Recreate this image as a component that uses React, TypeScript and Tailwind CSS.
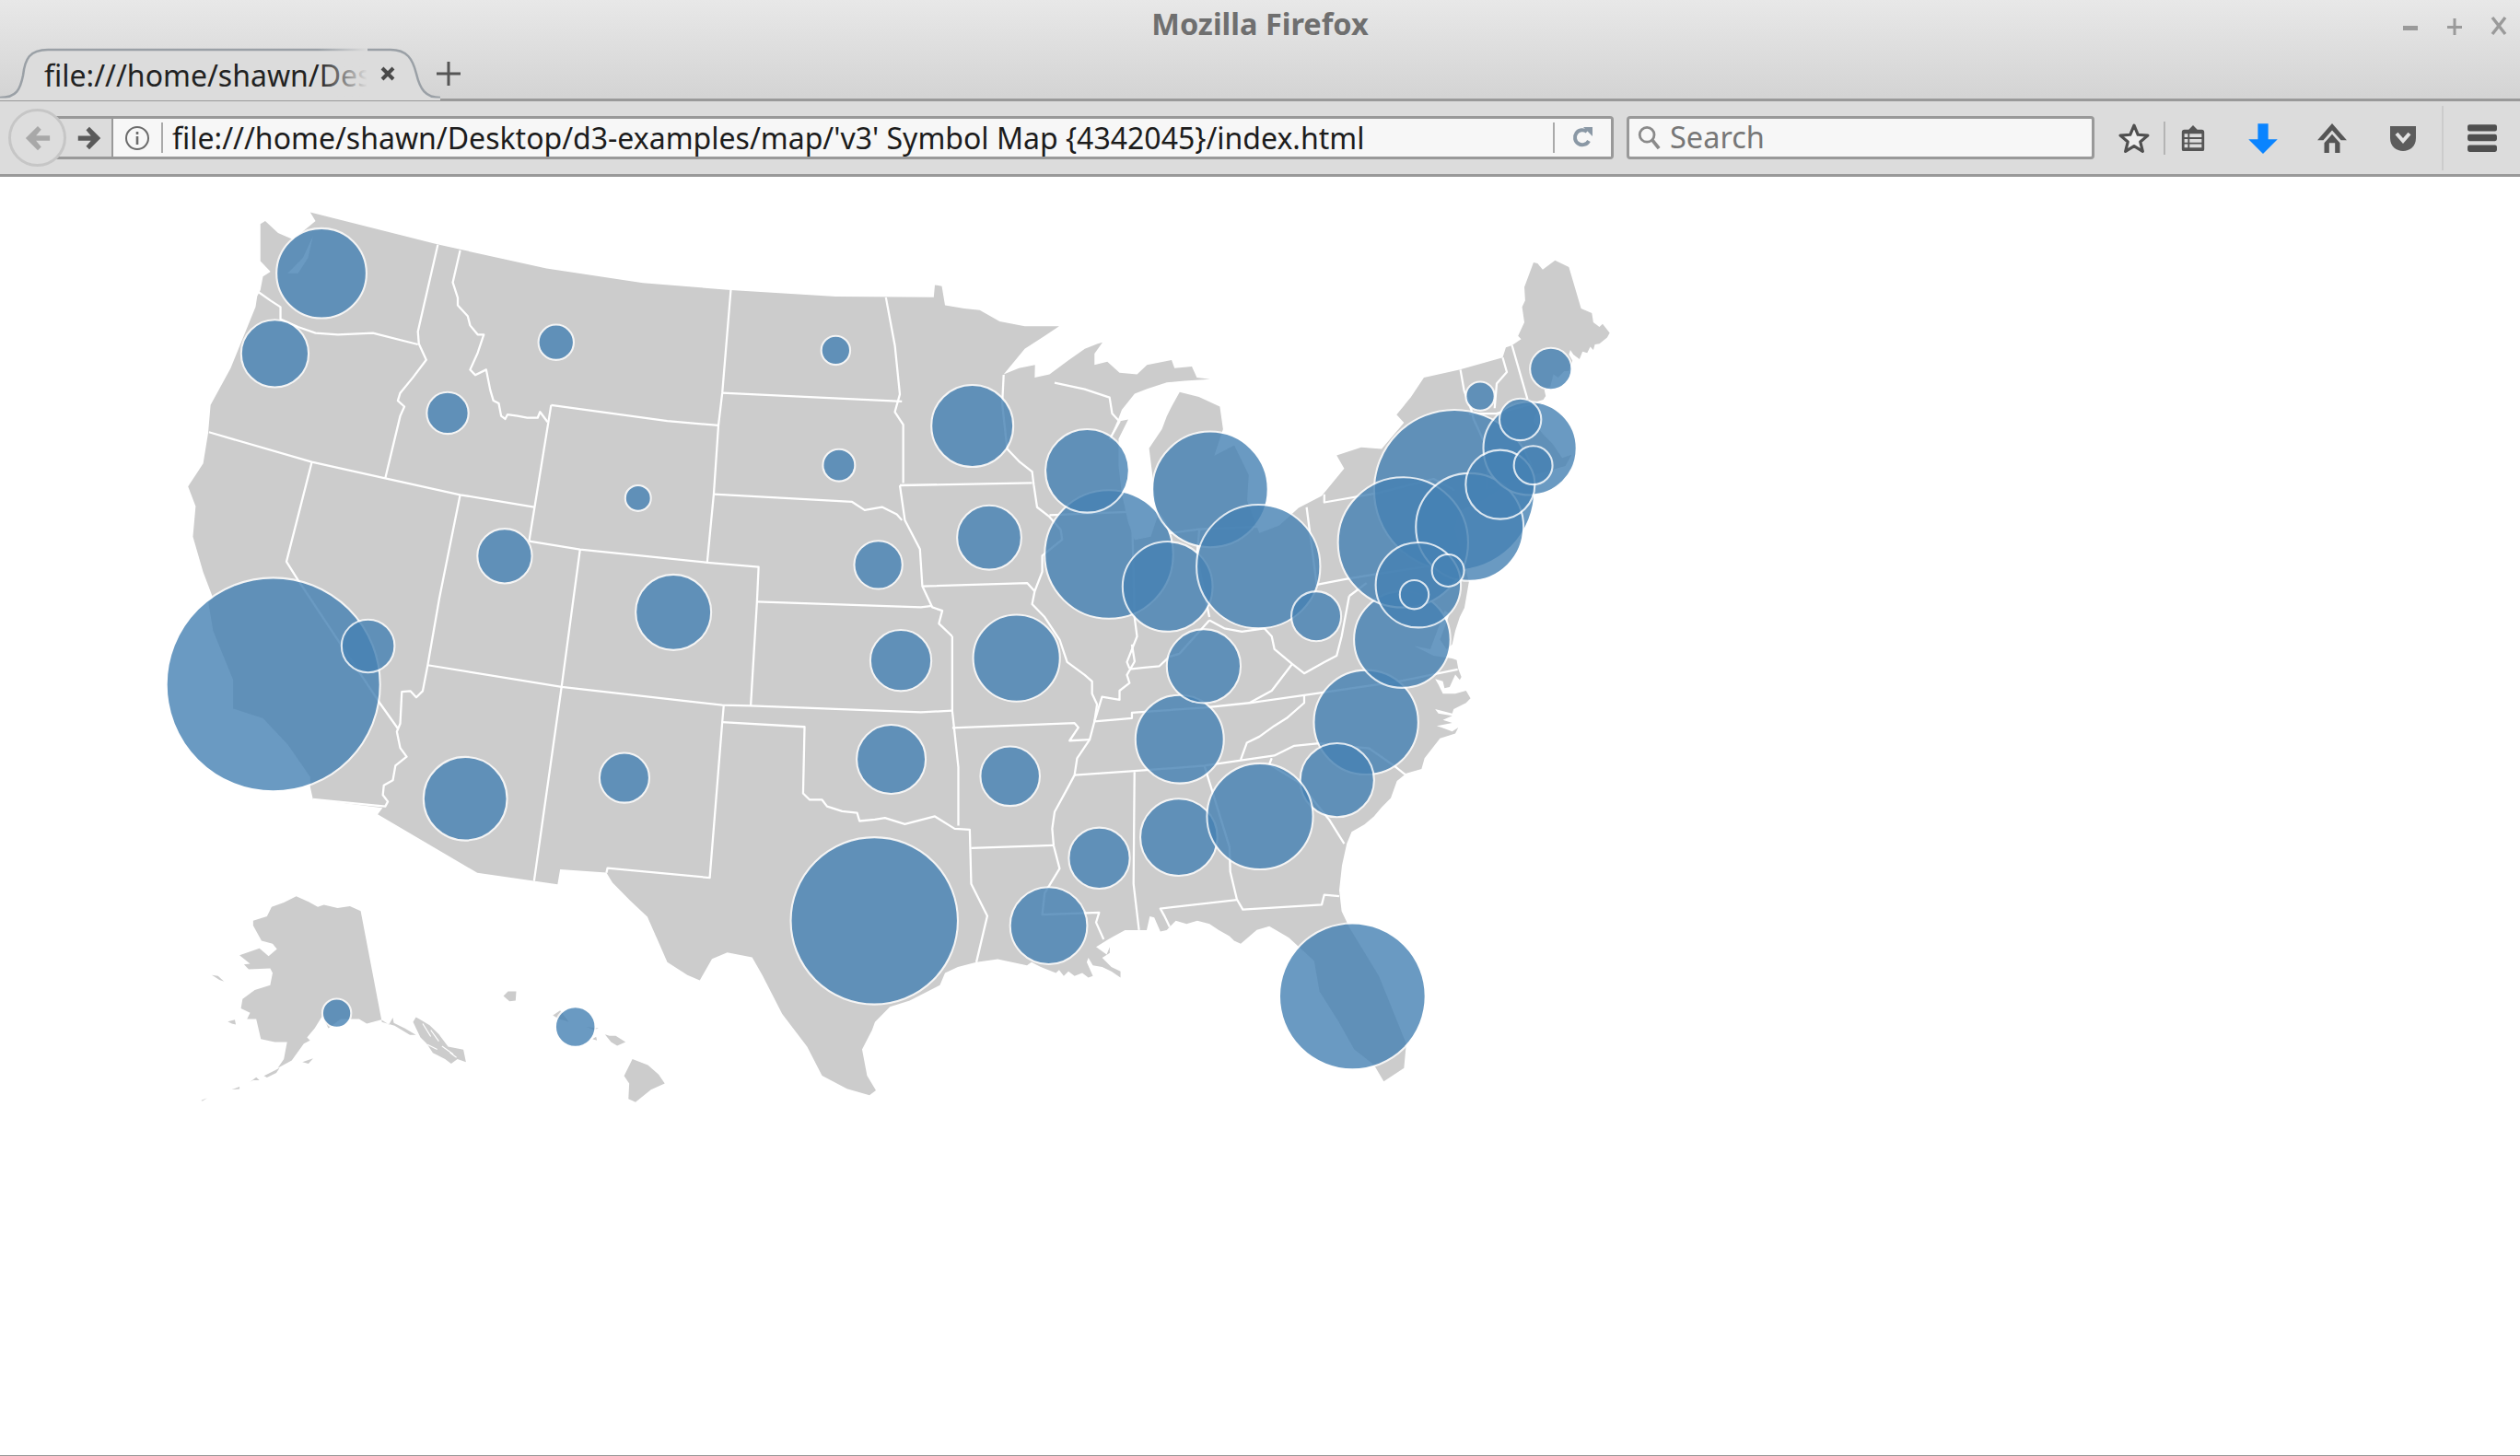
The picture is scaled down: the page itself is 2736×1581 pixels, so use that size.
import React from 'react';

// Land outline of the lower 48, in 1568-wide map units
const LAND =
  'M193 132 L272 152 L340 167 L400 176 L454.7 180.5 L520 184.5 L581 185 L581.7 177.3 L586 178 L588 190 L600 192 L609.6 193 L622 200 L637.6 203 L659 203 L650 209 L637.6 217 L624.5 233 L634 229 L644 227 L643.8 235 L653 233 L665 224 L675 217 L682.6 214 L686 213 L681 220 L681 227 L689 225 L696.6 232 L707.5 233 L713.7 227 L729 224 L730.8 229 L741.6 228 L744.7 235 L753 236 L737 237 L726 238 L713.7 242 L706 245 L698 255 L695.7 261 L690.4 273 L697 262 L702 261 L696 273 L696 290 L698 307 L702 325 L706 336 L716 334 L720 322 L717 295 L715 279 L723 267 L726 259 L729 253 L734 244 L746 247 L759 253 L761 267 L755.6 283.5 L768 277 L777 295.5 L776 311.6 L783.6 331.7 L796 327 L808 316 L822.4 308.6 L836.4 291.5 L831.7 283.4 L847 278.4 L859.7 279.4 L873.6 263 L869 258 L878 247 L886 235 L908 230 L935 222.5 L937 216.2 L940.8 214.9 L946.5 211 L944.6 209 L948.5 200.5 L947.1 191 L949 187 L948.5 178.6 L954.2 163.3 L956.7 163.9 L959.9 167.7 L967.6 162 L976.2 166.2 L983.8 192 L990.5 194.8 L991.4 200.5 L995.2 203.4 L997.2 201.5 L1001.6 207.2 L1000 210 L995.2 213.9 L992.4 214.3 L991.4 217.7 L989.5 215.8 L987.6 219.6 L984.7 218.7 L982.8 223.5 L979 220.6 L977.1 217.7 L976.2 220.6 L978.4 224.4 L976.2 231 L973.3 231 L969.5 235 L966.6 233 L964.7 240.6 L960.9 242.6 L961.8 246.4 L959.9 249.2 L957.5 253 L954 262 L960 270 L966 276 L972 285 L978 283 L974 290 L960 294 L945 298 L925 304 L935 303 L925 310 L908 318 L905 329 L909 343 L914 362 L911.2 378.2 L908.3 384 L905.5 392.5 L903.6 401 L900 404 L896 398 L902 382 L899 380 L893 396 L890 404 L880 402 L892 408 L903.6 409.7 L906.4 410.7 L907.4 416.4 L909.3 421.2 L908.3 423 L905.5 419.8 L902 427.5 L898.8 428.2 L897.8 424 L893 422.5 L895 426 L897.8 431.7 L905.5 431.7 L912.2 429.8 L915 434.5 L912.2 437.4 L904.5 441.2 L903.6 444 L893 441.2 L895 444 L903.6 445.4 L897.8 448 L903.6 449.8 L894 451.7 L897.8 453 L903.6 455.2 L907.4 452.7 L905.5 456.5 L896 459.4 L886.4 471.8 L884.5 478.5 L875 481.3 L869.2 486 L865.4 496.6 L859.6 502.4 L854.9 508 L849 513 L841 517.6 L838 525 L835 538.6 L833.3 554 L834.8 567 L839.5 577 L858 607.4 L875 649.4 L873.6 664.7 L861 673 L855 662.8 L842.6 653 L833 636 L821 617 L817.7 598 L802 583.5 L789.8 576.4 L782 578.7 L772 587.3 L767.9 585.4 L765 582.6 L758.4 578.8 L752.6 574.9 L745 573 L738.3 574.9 L731.6 573 L725.9 578.8 L722 579.7 L718.2 571 L715.4 570.2 L713.5 578.8 L700 578.8 L689.6 584.5 L682 589.3 L688.6 594 L690.5 589.3 L690.5 593 L685.8 596 L691.5 601.7 L697.2 604.5 L697.2 608.4 L691.5 604.5 L685.8 601.7 L680 600.7 L677.2 596 L676.2 598.8 L680 607.4 L677.2 608.4 L673.4 605.5 L668.6 607.4 L664.8 604.5 L661.9 607.4 L659 603.6 L657 605.5 L647.6 601.7 L641.8 598.8 L639 600.7 L620.8 596.9 L607.5 598.8 L596 601.7 L588 605.5 L584.8 613 L566 622.7 L553.7 626.5 L544.4 636 L542.6 641 L536.4 653 L539.5 669.4 L545 678.5 L541 681.6 L527 677.5 L511.5 669.4 L502.2 651.3 L486.7 631 L474.3 606.8 L468 595.7 L452.5 592.7 L443 596.7 L435.4 610 L427.7 606.8 L415.2 598.7 L409 584.6 L402.8 570.5 L392 560.4 L381 549.2 L377.3 543 L348.5 541 L346.9 550.3 L297 543.2 L235 506.8 L238 502.8 L194.7 497.3 L193 489.7 L193 483.6 L179 463.4 L163.6 447 L145 441 L145 423 L132.6 392.7 L129.5 374.5 L132.6 372.4 L126.4 356 L120 334 L121.7 315 L117 302.7 L126.4 288.4 L129.5 269.3 L131 252 L143.5 229 L159 191 L160 184.3 L162 180.5 L163.6 172 L168.3 169 L162 162.4 L162 139.4 L165 137.5 L173 145 L182.3 149 L196.3 137.5 Z';

const ALASKA = [
  'M224.4 566.9 L217.7 563.9 L210 565 L201.5 563.1 L197.7 564.4 L192 561.2 L184.3 557.7 L176.6 561.6 L169 564.4 L166.1 570.2 L157.5 573 L157.5 575.9 L162.7 585.4 L169.6 587.3 L172.3 590.6 L167.1 595 L161.4 590.2 L149 594.4 L155.6 599.8 L151.8 600.1 L154.7 603.2 L168.1 602.6 L169.6 605.5 L168.1 613.1 L158.5 616 L150.9 621.7 L149.9 627.5 L155.6 630.3 L153.7 634.1 L159.4 634.1 L162.3 646.6 L170.9 648.5 L178.6 648.5 L176.6 659 L172.8 664.7 L181.5 659.9 L189 649.4 L192.9 647.5 L191 645.6 L195.8 639.9 L200.5 632.2 L204.3 639.9 L212 634.1 L223.4 634.1 L228.2 637 L237.2 634.5 L242 637.5 L244.4 633.2 L245 636.5 L252 640 L258.8 644 L255 644 L245.5 638.3 L237.6 636 Z',
  'M188.1 660.9 L194.8 658.6 L191.9 661.9 Z',
  'M164.2 669.5 L171.9 665.7 L174 664.5 L171.9 667.6 L166.1 670.5 Z',
  'M155.6 673.3 L159.4 670.4 L161.4 672.3 L157.5 672.3 Z',
  'M144.2 678 L149 676.2 L149 677.7 Z',
  'M125 684.8 L128.9 683.2 L126 685.2 Z',
  'M131.8 606.8 L135.6 607.4 L139.4 610.8 L136.5 609.7 Z',
  'M141.7 635.7 L146.1 634.5 L146.7 637.6 L144.2 637 Z',
  'M257 636 L258.8 633 L261.6 634.5 L267.3 638 L273 643.6 L278.8 651.3 L288.3 653.2 L289.9 660.9 L284.6 659 L280.7 661.9 L276.9 659 L269.3 655.2 L265.5 649.4 L261.6 645.6 Z',
];

const HAWAII = [
  'M393.5 659 L403.1 662.8 L409.8 668.6 L413.6 674.3 L405 678.1 L395.4 685.8 L391 683.8 L391.5 674.3 L388.3 669.5 Z',
  'M376.4 643.7 L379.2 644.6 L383.1 644.6 L389.2 648.5 L384 650.8 L380.2 648.5 Z',
  'M313.2 619.8 L316.1 617 L321.2 617 L320.8 622.7 L317 623.1 Z',
  'M304.7 623.6 L306.6 622.7 Z',
  'M344 631.8 L348.5 628.8 L354 636 L347.5 634 Z',
  'M364.8 639 L372.4 639.9 L369.5 640.8 Z',
  'M368.6 646.6 L370.9 645.2 L371.4 647.5 Z',
];

// Water that shows through the circles
const SOUNDS = ['M194.7 147 L188.5 160.4 L179 170 L185.4 170 L191.6 160.4 Z'];

// Inlets in the southeast Alaska islands
const SPECKS = [
  'M263 637 L268 645',
  'M268 641 L273 648',
  'M266 650 L272 653',
  'M275 651 L282 656',
  'M280 655 L284 658',
];

// State borders
const BORDERS = [
  'M272.4 152.2 L260 206.3 L260.6 213.9 L265.2 223.9 L256.8 235 L249 244.5 L247.5 249.3 L251.6 253 L249 258.8 L239.7 297.6',
  'M286.3 155.7 L281.7 175.7 L284.8 185.3 L284.8 190 L291 196.7 L292.5 202.5 L297.2 208.2 L301 208.2 L297.2 219.6 L292.5 230 L295.7 233.4 L302.5 230 L305 242.6 L307 249.3 L310.3 251 L311.8 258.8 L314.3 260.7 L315.8 257.9 L322 258.8 L328 260 L334.5 260 L336 256.3 L340.7 262.6',
  'M342.9 252.1 L415.2 262 L447 264.7',
  'M342.9 252.1 L329.2 336.7',
  'M454.7 180.5 L449.4 244.5 L447 264.7 L444.1 307.5 L440 350',
  'M329.2 336.7 L360.9 341.9 L440 350 L472 352.8 L471 374.4 L467.1 439.2',
  'M160.5 181.5 L168.3 187 L174.5 191 L174.5 198.6 L185.4 203.4 L196.3 207.2 L210.2 208.2 L232 207.2 L260 214.3',
  'M130 268.9 L194 287.5 L239.7 297.6 L286.3 307.9 L332.3 315.5',
  'M194 287.5 L178.2 349.5 L185.4 361 L236 437.1 L247.5 453.3',
  'M286.3 307.9 L273.3 372.5 L266.1 413.9 L263 430 L259 434 L255.3 430 L250 430.5 L249 450.3 L246.9 455.3 L249 465.4 L253 470.9 L246 476.5 L244.4 485.6 L238.8 488.7 L238.2 494.7 L241.3 498.8 L239.7 501.8 L194.7 497.3',
  'M266.1 413.9 L349.4 427.4 L449.4 438.8 L467.1 439.2 L573 443.2 L592.5 442.2',
  'M360.9 341.9 L349.4 427.4 L332.3 548.2',
  'M450.3 439.2 L449.4 449.3 L441.6 546.2 L378 540.2 L377.3 543.2',
  'M449.4 449.3 L500.6 452.3 L499.7 493.7 L503.8 497.7 L511.5 497.7 L514.6 501.8 L524 504.8 L533.3 505.8 L534.8 510.9 L544.4 510 L550.6 509 L563 512.8 L581.7 508 L594 515.7 L603.4 516.3 L604.3 550 L614.3 570 L607.5 598.8',
  'M592.5 396 L592.5 442.2 L596.3 477.5 L596.3 513.8',
  'M604.3 527.7 L655.6 526',
  'M592.5 453 L668.6 450 L671 452.7 L665.5 460.9 L678 460.3',
  'M624.5 233.2 L623.6 251.3 L626.7 279.4 L634.5 287.5 L642.2 293.5 L643.2 301.5 L645.3 315.6 L653 321.6 L660 329.7 L660.9 335.7 L648.5 345.8 L648.5 355.8 L643.8 367.9 L642.2 375.9 L650 384 L659.3 398 L664 412 L674.9 420 L679.5 424 L679.5 431.7 L682.6 438.3 L681 448.9 L678 460.3 L670.2 471.8 L668.6 482.3 L664 490.9 L656.2 505.2 L654.7 515.7 L655.6 526.2 L659.3 540.5 L650 555.8 L648.5 569.2 L683.9 567.9 L682 574 L686.7 584.5',
  'M559.9 302 L642.2 300.5',
  'M551.2 185 L556.8 215 L559.9 245.3 L556.8 256.3 L562 264.3 L562 300.5',
  'M559.9 302 L563 323.6 L572.4 341.7 L573.9 364.8 L580.1 377.9 L586.3 380 L584.2 388 L592.5 396',
  'M573.9 364.8 L639.1 362.8 L643.8 367.9',
  'M449.4 244.5 L561.2 249.8',
  'M471 374.4 L573 377.8 L580 377',
  'M444.1 307.5 L530.2 312.3 L538 317.4 L548.8 315.5 L558 320 L561.2 323.7',
  'M653 320.6 L701.2 318.6',
  'M656.2 238.2 L674.9 242.2 L690.4 247.3 L692 257.3 L696.6 262.3 L690.4 273.4',
  'M727.7 331.7 L746.3 329.3 L783.6 327.7',
  'M704.4 319.6 L705.9 384 L707.5 396 L701.2 412 L702.8 416',
  'M746.3 329.3 L744.7 345.8 L752.5 384',
  'M752.5 386 L761.8 391 L772.7 393 L786.7 391 L791.3 396 L793 404 L803.8 413 L811.5 419 L824 412 L831.7 408 L834.8 396 L839.5 370.9',
  'M702.8 416.4 L712.1 415.4 L721.4 414.5 L727.6 408.7 L733.9 406.8 L752.5 386',
  'M704.3 401 L706 411.6 L701.2 420 L702.8 425 L696.6 429.8 L696.6 435.5 L685.7 433.6 L681 448.9 L704.3 446.9 L704.3 443.5 L749.4 440.3 L777.4 437.4 L811.5 432.6 L870.5 424 L907 416.5',
  'M777.4 437.4 L791.3 429.8 L803.8 413.5',
  'M811.5 432.6 L811.5 437.4 L800.6 446.9 L792.9 451.7 L783.6 458.4 L775.8 462.2 L772 472.7',
  'M668.6 482.3 L705.9 479.8 L749.4 476.5 L792.9 470.2 L805.3 464.1 L820.8 462.6 L851.9 465.7 L867.4 476.5 L875 482.5',
  'M791.3 471.8 L789.8 475.6 L808.4 487 L827 510 L836.4 525',
  'M705.9 480.4 L705.3 550 L708.7 578.8',
  'M749.4 476.5 L765 527 L765.5 542.4 L769.6 559.6 L773.3 566 L822.4 563 L824 556.8 L833.3 557.7',
  'M769.6 560 L722 565.4 L724.5 570 L727.8 576.8',
  'M813 315.6 L819.3 363.8 L837.9 360.2 L858 357 L892.3 351.8',
  'M824 307.6 L824 312.6 L858 306.6 L892 298 L905 305',
  'M839.5 370.9 L850.3 362.8',
  'M908.7 230 L911 243 L915.6 255.3 L917 261.3',
  'M935 222.5 L937.6 231.5 L931.3 238.7 L930 254',
  'M914 257.3 L931 257.3 L960.6 249.3',
  'M940.8 214.9 L950.4 248.3',
  'M917 261 L926.4 281.4 L925 304',
];

// cx, cy, r per state, in draw order
const CIRCLES: [number, number, number][] = [
  [170, 426, 66.5], [229, 402, 16.5], [200, 170, 28], [171, 220, 21], [278.5, 257, 13], [346, 213, 11],
  [520, 218, 9], [522, 289.5, 10], [397, 310, 8], [314, 346, 17], [419, 381, 23.5], [289.5, 497, 26],
  [388.5, 484, 15.5], [546.5, 351.5, 15], [560.5, 411, 19], [554.5, 472.5, 21.5], [544, 573, 52],
  [605, 265, 25.5], [615.5, 334.5, 20], [632.5, 409.5, 27], [628.5, 483, 18.5], [652.5, 576, 24],
  [684, 534, 19], [733.5, 521, 24], [734, 460, 27.5], [749, 414.5, 23], [690, 345, 40], [676.5, 293, 26],
  [753, 304.5, 36], [726.5, 365, 28], [783, 352.5, 38.5], [819, 383.5, 15.5], [850, 449.5, 32.5],
  [872.5, 398, 30], [832, 485.5, 23], [784, 508, 33], [841.5, 620, 45.5], [905, 305, 50], [873, 337.5, 40.5],
  [914.5, 328, 33.5], [882.5, 364, 26.5], [901, 355, 10], [880, 370, 9], [952, 279, 29], [933.5, 301.5, 21.5],
  [954, 289.5, 12], [946, 261, 13], [921, 246.5, 9], [965, 229.5, 13], [209.5, 630.5, 9], [358, 639, 12.5],
];

const SymbolMap = () => (
  <svg className="block w-[2736px] h-[1388px]" viewBox="0 110 1568 795.5">
    <g fill="#cccccc">
      <path d={LAND} />
      {ALASKA.map((d) => (
        <path key={d} d={d} />
      ))}
      {HAWAII.map((d) => (
        <path key={d} d={d} />
      ))}
    </g>
    {SOUNDS.map((d) => (
      <path key={d} d={d} fill="#ffffff" />
    ))}
    <g fill="none" stroke="#ffffff" strokeWidth={0.7}>
      {SPECKS.map((d) => (
        <path key={d} d={d} />
      ))}
    </g>
    <g fill="none" stroke="#ffffff" strokeWidth={1.3} strokeLinejoin="round">
      {BORDERS.map((d) => (
        <path key={d} d={d} />
      ))}
    </g>
    <g fill="#4682b4" stroke="#ffffff" strokeWidth={1.2}>
      {CIRCLES.map(([cx, cy, r]) => (
        <circle key={`${cx}-${cy}`} cx={cx} cy={cy} r={r} opacity={0.8} />
      ))}
    </g>
  </svg>
);

const ToolIcon = ({ children, className }: { children: React.ReactNode; className: string }) => (
  <svg viewBox="0 0 32 32" className={className}>
    {children}
  </svg>
);

const TitleBar = () => (
  <div className="flex items-center h-[53px] relative">
    <span className="w-full text-center text-[32.5px] font-bold text-[#6f6f6f] leading-none">Mozilla Firefox</span>
    <div className="absolute right-[14px] top-[16px] flex items-center gap-[30px] text-[#9a9a9a]">
      <svg viewBox="0 0 18 24" className="w-[18px] h-[24px]">
        <rect x="1" y="12" width="16" height="5" fill="currentColor" />
      </svg>
      <svg viewBox="0 0 18 24" className="w-[18px] h-[24px]">
        <path d="M1 12h16v3H1z M7.5 4h3v18h-3z" fill="currentColor" />
      </svg>
      <svg viewBox="0 0 18 24" className="w-[18px] h-[24px]">
        <path d="M2 3l14 18M16 3L2 21" stroke="currentColor" strokeWidth="3.4" fill="none" />
      </svg>
    </div>
  </div>
);

const TabStrip = () => (
  <div className="flex items-center h-[57px] border-b-[3px] border-[#999999] relative">
    <div className="relative w-[478px] h-[57px] shrink-0 pl-[48px] flex items-center">
      <svg className="absolute left-0 top-0 w-[478px] h-[57px]" viewBox="0 0 478 57">
        <path
          d="M0 54 C18 54 22 45 25 30 C27 12 32 2 52 2 L424 2 C442 2 448 12 452 28 C456 45 462 54 478 54 L478 57 L0 57 Z"
          fill="#dcdcdc"
          stroke="#9aa0a6"
          strokeWidth="2.5"
        />
        <rect x="0" y="54.5" width="478" height="3" fill="#dcdcdc" />
      </svg>
      <span className="relative w-[350px] overflow-hidden whitespace-nowrap text-[32px] leading-none text-[#222222] pt-[4px]">
        file:///home/shawn/Desktop
      </span>
      <span className="absolute left-[345px] top-0 w-[54px] h-[54px] bg-gradient-to-r from-transparent to-[#dcdcdc]" />
      <svg viewBox="0 0 18 18" className="relative ml-[14px] w-[18px] h-[18px]">
        <path d="M3 3l12 12M15 3L3 15" stroke="#4a4a4a" strokeWidth="4" fill="none" />
      </svg>
    </div>
    <svg viewBox="0 0 26 26" className="-ml-[4px] w-[26px] h-[26px]">
      <path d="M0 13h26M13 0v26" stroke="#555555" strokeWidth="3" fill="none" />
    </svg>
  </div>
);

const NavToolbar = () => (
  <div className="flex items-center h-[82px] border-b-[3px] border-[#999999] bg-[#dcdcdc] pl-[9px]">
    <div className="relative z-10 w-[63px] h-[63px] shrink-0 rounded-full bg-[#dddddd] border-[3px] border-[#c6c6c6] flex items-center justify-center">
      <svg viewBox="0 0 32 32" className="w-[30px] h-[30px]">
        <path d="M16 2L2 16l14 14 4-4-6-7h16v-6H14l6-7z" fill="#a8a8a8" />
      </svg>
    </div>
    <div className="flex items-stretch h-[47px] w-[1692px] -ml-[12px] shrink-0 border-y-[3px] border-r-[3px] border-[#999999] rounded-r-[4px] bg-[#f7f7f7]">
      <div className="w-[63px] bg-[#dcdcdc] border-r-[2px] border-[#999999] flex items-center justify-end pr-[10px] shrink-0">
        <svg viewBox="0 0 32 32" className="w-[28px] h-[28px]">
          <path d="M16 2l14 14-14 14-4-4 6-7H2v-6h16l-6-7z" fill="#5a5a5a" />
        </svg>
      </div>
      <div className="w-[54px] shrink-0 flex items-center justify-center border-r-[2px] border-[#aaaaaa] my-[4px]">
        <svg viewBox="0 0 28 28" className="w-[28px] h-[28px]">
          <circle cx="14" cy="14" r="12" fill="none" stroke="#6b6b6b" strokeWidth="2" />
          <path d="M14 7v3M14 12v9" stroke="#6b6b6b" strokeWidth="2.6" />
        </svg>
      </div>
      <span className="pl-[10px] text-[32px] leading-[41px] whitespace-nowrap text-[#1c1c1c] w-[1509px] shrink-0">
        file:///home/shawn/Desktop/d3-examples/map/'v3' Symbol Map {'{'}4342045{'}'}/index.html
      </span>
      <div className="flex-1 border-l-[2px] border-[#aaaaaa] my-[4px] flex items-center justify-center">
        <svg viewBox="0 0 24 28" className="w-[24px] h-[28px]">
          <path d="M18 17a8 8 0 1 1-2-10" fill="none" stroke="#8a98a5" strokeWidth="4" />
          <path d="M12 2h10v10z" fill="#8a98a5" />
        </svg>
      </div>
    </div>
    <div className="flex items-center h-[47px] w-[508px] ml-[14px] shrink-0 border-[3px] border-[#999999] rounded-[4px] bg-[#f7f7f7] pl-[8px]">
      <svg viewBox="0 0 28 32" className="w-[26px] h-[30px]">
        <circle cx="12" cy="12" r="8.5" fill="none" stroke="#8a8a8a" strokeWidth="3" />
        <path d="M18 18l8 10" stroke="#8a8a8a" strokeWidth="4" />
      </svg>
      <span className="ml-[10px] text-[32.5px] leading-none text-[#777777]">Search</span>
    </div>
    <div className="flex items-center h-full ml-[26px]">
      <ToolIcon className="w-[34px] h-[34px]">
        <path d="M16 3l4 9.5 10 .8-7.6 6.5 2.4 9.7-8.8-5.3-8.8 5.3 2.4-9.7L2 13.3l10-.8z" fill="#eeeeee" stroke="#4f4f4f" strokeWidth="3" strokeLinejoin="round" />
      </ToolIcon>
      <div className="w-[2px] h-[36px] bg-[#b4b4b4] ml-[15px]" />
      <ToolIcon className="w-[30px] h-[34px] ml-[15px]">
        <path d="M16 1l5 5h5a3 3 0 0 1 3 3v20a2 2 0 0 1-2 2H5a2 2 0 0 1-2-2V9a3 3 0 0 1 3-3h5z" fill="#555555" />
        <path d="M6 11h20v4H6zM6 17h20v4H6zM6 23h20v4H6z" fill="#dddddd" />
        <path d="M11 9v20" stroke="#555555" strokeWidth="2" />
      </ToolIcon>
      <ToolIcon className="w-[36px] h-[38px] ml-[43px]">
        <path d="M11 2h10v15h9L16 31 2 17h9z" fill="#0a84ff" />
      </ToolIcon>
      <ToolIcon className="w-[34px] h-[36px] ml-[40px]">
        <path d="M16 1L1 18h6L16 8l9 10h6z" fill="#555555" />
        <path d="M8 21L16 12l8 9v10h-5V21h-6v10H8z" fill="#555555" />
      </ToolIcon>
      <ToolIcon className="w-[32px] h-[36px] ml-[44px]">
        <path d="M2 3h28v13c0 9-7 14-14 14S2 25 2 16z" fill="#5c5c5c" />
        <path d="M9 11l7 8 7-8" fill="none" stroke="#e4e4e4" strokeWidth="4" />
      </ToolIcon>
      <div className="w-[2px] h-[70px] bg-[#cccccc] ml-[26px]" />
      <ToolIcon className="w-[34px] h-[34px] ml-[25px]">
        <path d="M1 4a2 2 0 0 1 2-2h26a2 2 0 0 1 2 2v3a2 2 0 0 1-2 2H3a2 2 0 0 1-2-2zM1 14a2 2 0 0 1 2-2h26a2 2 0 0 1 2 2v3a2 2 0 0 1-2 2H3a2 2 0 0 1-2-2zM1 25a2 2 0 0 1 2-2h26a2 2 0 0 1 2 2v3a2 2 0 0 1-2 2H3a2 2 0 0 1-2-2z" fill="#4f4f4f" />
      </ToolIcon>
    </div>
  </div>
);

export default function App() {
  return (
    <div className="w-[2736px] h-[1581px] overflow-hidden bg-white border-b border-[#999999] font-['Noto_Sans',sans-serif]">
      <div className="bg-gradient-to-b from-[#e8e8e8] to-[#d3d3d3]">
        <TitleBar />
        <TabStrip />
      </div>
      <NavToolbar />
      <SymbolMap />
    </div>
  );
}
